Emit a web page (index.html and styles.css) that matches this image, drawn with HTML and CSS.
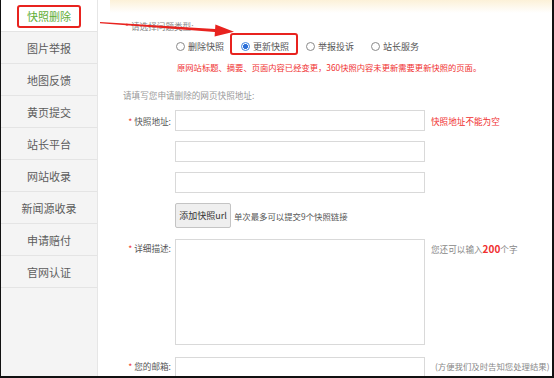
FILE: index.html
```html
<!DOCTYPE html>
<html lang="zh-CN">
<head>
  <meta charset="UTF-8">
  <title>快照删除</title>
  <link rel="stylesheet" href="styles.css">
</head>
<body>
  <div class="page">
    <ul class="side">
      <li class="active"><span class="mark">快照删除</span></li>
      <li>图片举报</li>
      <li>地图反馈</li>
      <li>黄页提交</li>
      <li>站长平台</li>
      <li>网站收录</li>
      <li>新闻源收录</li>
      <li>申请赔付</li>
      <li>官网认证</li>
    </ul>
    <div class="main">
      <p class="q-title"><i class="req">*</i>请选择问题类型:</p>
      <div class="types">
        <label class="opt"><span class="radio"></span>删除快照</label>
        <label class="opt on"><span class="radio"></span>更新快照<span class="box"></span></label>
        <label class="opt"><span class="radio"></span>举报投诉</label>
        <label class="opt"><span class="radio"></span>站长服务</label>
      </div>
      <p class="note">原网站标题、摘要、页面内容已经变更，360快照内容未更新需要更新快照的页面。</p>
      <p class="sub">请填写您申请删除的网页快照地址:</p>
      <div class="row">
        <span class="lbl"><i class="req">*</i>快照地址:</span>
        <span class="field"></span>
        <span class="err">快照地址不能为空</span>
      </div>
      <div class="row">
        <span class="lbl"></span>
        <span class="field"></span>
      </div>
      <div class="row">
        <span class="lbl"></span>
        <span class="field"></span>
      </div>
      <div class="row">
        <span class="lbl"></span>
        <div class="add">
          <button class="btn">添加快照url</button>
          <span class="tip">单次最多可以提交9个快照链接</span>
        </div>
      </div>
      <div class="row top">
        <span class="lbl"><i class="req">*</i>详细描述:</span>
        <span class="field area"></span>
        <span class="hint">您还可以输入<b>200</b>个字</span>
      </div>
      <div class="row top">
        <span class="lbl"><i class="req">*</i>您的邮箱:</span>
        <span class="field"></span>
        <span class="hint mail">(方便我们及时告知您处理结果)</span>
      </div>
    </div>
    <svg class="arrow" width="554" height="60" viewBox="0 0 554 60">
      <polygon points="99,22 214.1,28.9 214.4,24.5 233,31.8 213.6,36.5 213.9,32.1 99,23.2" fill="#e8231f"/>
    </svg>
  </div>
</body>
</html>
```

FILE: styles.css
```css
body {
  margin: 0;
  background: #fff;
}
.page {
  position: relative;
  display: flex;
  width: 554px;
  height: 378px;
  box-sizing: border-box;
  border-left: 1px solid #111;
  border-right: 2px solid #111;
  border-bottom: 2px solid #111;
  overflow: hidden;
  font-family: "Noto Sans CJK SC", sans-serif;
  font-size: 8.6px;
  color: #555;
}
.side {
  list-style: none;
  margin: 0;
  padding: 0;
  width: 96px;
  flex-shrink: 0;
  background: #f4f4f4;
  border-right: 1px solid #e6e6e6;
}
.side li {
  height: 31px;
  line-height: 33px;
  border-bottom: 1px solid #e4e4e4;
  text-align: center;
  font-size: 11px;
  color: #5c5c5c;
}
.side li.active {
  display: flex;
  justify-content: center;
  align-items: center;
  padding-top: 1px;
  height: 30px;
  background: #fff;
  line-height: normal;
}
.mark {
  display: inline-block;
  height: 19px;
  line-height: 19px;
  padding: 0 8px;
  border: 2px solid #e8231f;
  border-radius: 3px;
  color: #62ae35;
}
.main {
  flex: 1;
  min-width: 0;
  padding-top: 19px;
  background: linear-gradient(to bottom, #fcf1d8, rgba(255, 255, 255, 0)) 12px 0 / calc(100% - 12px) 13px no-repeat, #fff;
}
p {
  margin: 0;
}
.req {
  font-style: normal;
  color: #f03a3a;
  margin-right: 2px;
}
.q-title {
  height: 14px;
  line-height: 14px;
  margin-left: 27px;
  color: #888;
}
.types {
  display: flex;
  gap: 17px;
  margin-top: 6px;
  padding-left: 78px;
  height: 14px;
}
.opt {
  position: relative;
  display: flex;
  align-items: center;
  gap: 3px;
  font-size: 9px;
  color: #555;
}
.radio {
  width: 9px;
  height: 9px;
  box-sizing: border-box;
  border: 1px solid #8a8a8a;
  border-radius: 50%;
  background: #fff;
}
.on .radio {
  border-color: #3f84e0;
  background: radial-gradient(circle, #2c6fd8 0 2.2px, #fff 2.7px);
}
.box {
  position: absolute;
  left: -11px;
  top: -6px;
  width: 68px;
  height: 22px;
  box-sizing: border-box;
  border: 2px solid #e8231f;
  border-radius: 3px;
}
.note {
  margin-top: 8px;
  margin-left: 79px;
  height: 12px;
  line-height: 12px;
  font-size: 8.3px;
  color: #f03030;
}
.sub {
  margin-top: 16px;
  margin-left: 25px;
  height: 12px;
  line-height: 12px;
  color: #999;
}
.row {
  display: grid;
  grid-template-columns: 77px 250px auto;
  align-items: center;
  margin-top: 10px;
}
.sub + .row {
  margin-top: 9px;
}
.row.top {
  align-items: start;
  margin-top: 11px;
}
.row.top:last-child {
  margin-top: 12px;
}
.lbl {
  text-align: right;
  padding-right: 4px;
  color: #555;
}
.top .lbl,
.top .hint {
  line-height: 19px;
}
.field {
  display: block;
  height: 21px;
  box-sizing: border-box;
  border: 1px solid #d9d9d9;
  background: #fff;
}
.field.area {
  height: 106px;
}
.err {
  margin-left: 6px;
  color: #f03030;
}
.hint {
  margin-left: 6px;
  color: #888;
  white-space: nowrap;
}
.hint b {
  color: #f03030;
  font-size: 10px;
}
.hint.mail {
  margin-left: 10px;
  font-size: 8.4px;
}
.add {
  display: flex;
  align-items: center;
  gap: 3px;
  grid-column: 2 / 4;
}
.btn {
  width: 56px;
  height: 25px;
  padding: 0;
  border: 1px solid #c4c4c4;
  border-radius: 2px;
  background: #efefef;
  font-family: inherit;
  font-size: 9px;
  color: #333;
}
.tip {
  font-size: 8.4px;
  color: #555;
}
.arrow {
  position: absolute;
  left: 0;
  top: 0;
}
```
